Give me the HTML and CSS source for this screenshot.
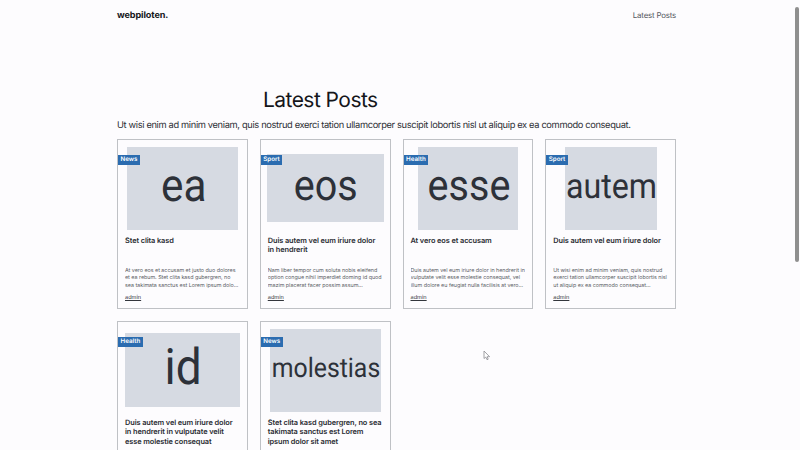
FILE: index.html
```html
<!DOCTYPE html>
<html lang="en">
<head>
<meta charset="utf-8">
<title>webpiloten.</title>
<link rel="stylesheet" href="styles.css">
</head>
<body>
<div class="page">
  <header class="topbar">
    <a class="brand" href="#">webpiloten.</a>
    <a class="navlink" href="#">Latest Posts</a>
  </header>
  <main>
    <h1 class="title">Latest Posts</h1>
    <p class="lead">Ut wisi enim ad minim veniam, quis nostrud exerci tation ullamcorper suscipit lobortis nisl ut aliquip ex ea commodo consequat.</p>
    <div class="grid">
      <article class="card">
        <span class="badge">News</span>
        <div class="media"><div class="ph ph-ea"><span class="ph-word">ea</span></div></div>
        <h2 class="card-title">Stet clita kasd</h2>
        <p class="excerpt">At vero eos et accusam et justo duo dolores et ea rebum. Stet clita kasd gubergren, no sea takimata sanctus est Lorem ipsum dolo...</p>
        <a class="author" href="#">admin</a>
      </article>
      <article class="card">
        <span class="badge">Sport</span>
        <div class="media"><div class="ph ph-eos"><span class="ph-word">eos</span></div></div>
        <h2 class="card-title">Duis autem vel eum iriure dolor in hendrerit</h2>
        <p class="excerpt">Nam liber tempor cum soluta nobis eleifend option congue nihil imperdiet doming id quod mazim placerat facer possim assum...</p>
        <a class="author" href="#">admin</a>
      </article>
      <article class="card">
        <span class="badge">Health</span>
        <div class="media"><div class="ph ph-esse"><span class="ph-word">esse</span></div></div>
        <h2 class="card-title">At vero eos et accusam</h2>
        <p class="excerpt">Duis autem vel eum iriure dolor in hendrerit in vulputate velit esse molestie consequat, vel illum dolore eu feugiat nulla facilisis at vero...</p>
        <a class="author" href="#">admin</a>
      </article>
      <article class="card">
        <span class="badge">Sport</span>
        <div class="media"><div class="ph ph-autem"><span class="ph-word">autem</span></div></div>
        <h2 class="card-title">Duis autem vel eum iriure dolor</h2>
        <p class="excerpt">Ut wisi enim ad minim veniam, quis nostrud exerci tation ullamcorper suscipit lobortis nisl ut aliquip ex ea commodo consequat...</p>
        <a class="author" href="#">admin</a>
      </article>
      <article class="card">
        <span class="badge">Health</span>
        <div class="media"><div class="ph ph-id"><span class="ph-word">id</span></div></div>
        <h2 class="card-title">Duis autem vel eum iriure dolor in hendrerit in vulputate velit esse molestie consequat</h2>
      </article>
      <article class="card">
        <span class="badge">News</span>
        <div class="media"><div class="ph ph-molestias"><span class="ph-word">molestias</span></div></div>
        <h2 class="card-title">Stet clita kasd gubergren, no sea takimata sanctus est Lorem ipsum dolor sit amet</h2>
      </article>
    </div>
  </main>
</div>
<div class="scroll-thumb"></div>
<svg class="cursor" width="8" height="11" viewBox="0 0 8 11"><path d="M1 1v7.5l1.8-1.4 1.2 2.6 1.2-.5-1.1-2.5H6.6z" fill="#fff" stroke="#8a8a90" stroke-width="0.8"/></svg>
</body>
</html>
```
FILE: styles.css
```css
* { box-sizing: border-box; }
html, body { margin: 0; padding: 0; }
html { overflow: hidden; }
body {
  background: #fdfcfe;
  color: #23252b;
  font-family: Inter, "Noto Sans", sans-serif;
  text-rendering: geometricPrecision;
  height: 450px;
  overflow: hidden;
}
a { color: inherit; text-decoration: none; }
.page { width: 793px; padding: 0 117px; }
.topbar {
  display: flex;
  justify-content: space-between;
  align-items: center;
  height: 30px;
}
.brand { font-size: 9.1px; font-weight: 700; color: #15161a; letter-spacing: -0.1px; }
.navlink { font-size: 7.9px; color: #55585f; letter-spacing: -0.2px; }
.title {
  margin: 59px 0 0 146px;
  font-size: 21px;
  line-height: 24px;
  font-weight: 400;
  color: #15161a;
  letter-spacing: -0.55px;
}
.lead {
  margin: 6px 0 0;
  font-size: 9.3px;
  line-height: 14px;
  color: #2c2e34;
  letter-spacing: -0.35px;
  white-space: nowrap;
}
.grid {
  display: grid;
  grid-template-columns: repeat(4, minmax(0, 1fr));
  gap: 12px;
  margin-top: 6px;
}
.card {
  position: relative;
  height: 170px;
  border: 1px solid #bfc1c5;
  padding: 6px 7px 0;
  display: flex;
  flex-direction: column;
}
.badge {
  position: absolute;
  left: 0;
  top: 15px;
  height: 10px;
  padding: 0 2.6px;
  background: #2b6cb0;
  color: #fff;
  font-size: 6.2px;
  line-height: 10px;
  font-weight: 600;
}
.media {
  height: 84px;
  display: flex;
  align-items: center;
  justify-content: center;
  flex: none;
}
.ph {
  flex: none;
  background: #d6dae2;
  color: #2d3139;
  display: flex;
  align-items: center;
  justify-content: center;
  font-family: Roboto, sans-serif;
  font-weight: 400;
  overflow: hidden;
}
.ph-word { display: block; flex: none; transform: translate(1px, -2px) scaleX(0.92); }
.ph-ea { width: 111px; height: 83px; font-size: 46px; }
.ph-eos { width: 117px; height: 68px; font-size: 43px; }
.ph-esse { width: 100px; height: 83px; font-size: 43px; }
.ph-autem { width: 92px; height: 83px; font-size: 35px; }
.ph-id { width: 115.5px; height: 74px; font-size: 50px; }
.ph-molestias { width: 111px; height: 83px; font-size: 27px; }
.card-title {
  margin: 6px 0 0;
  height: 28px;
  font-size: 7.4px;
  line-height: 9.3px;
  font-weight: 600;
  color: #2a2c32;
  letter-spacing: -0.1px;
}
.excerpt {
  margin: 4px 0 0;
  font-size: 5.4px;
  line-height: 7.4px;
  letter-spacing: -0.03px;
  color: #5a5d64;
  height: 23px;
  overflow: hidden;
}
.author {
  margin-top: 3px;
  font-size: 5.6px;
  line-height: 9px;
  color: #33363c;
  text-decoration: underline;
}
.scroll-thumb {
  position: fixed;
  right: 1px;
  top: 7px;
  width: 4px;
  height: 255px;
  background: #8f8f8f;
  border-radius: 2px;
}
.cursor {
  position: fixed;
  left: 483px;
  top: 350px;
}
```
